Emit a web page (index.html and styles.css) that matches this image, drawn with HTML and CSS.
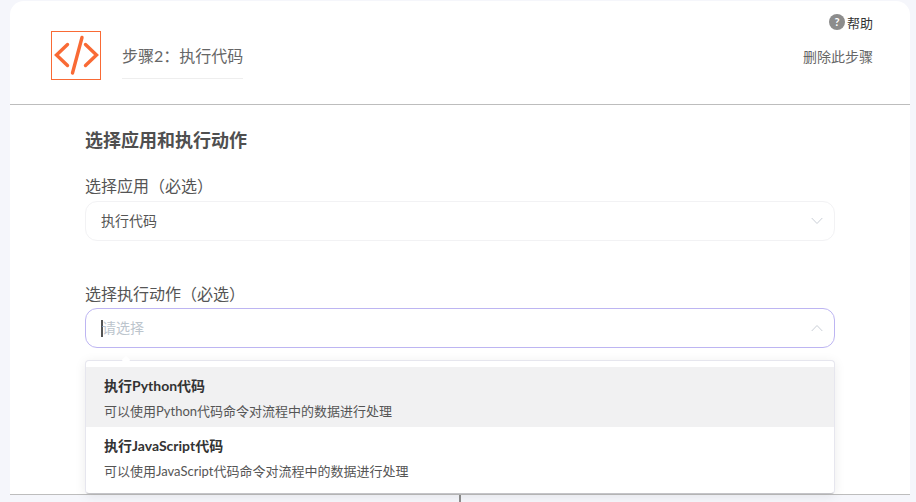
FILE: index.html
```
<!DOCTYPE html>
<html lang="zh">
<head>
<meta charset="utf-8">
<title>步骤2&#xFF1A;执行代码</title>
<link rel="stylesheet" href="styles.css">
</head>
<body>
<main class="card">
  <header class="head">
    <div class="logo">
      <svg viewBox="0 0 48 47" width="48" height="47" aria-hidden="true">
        <path d="M15.500 12.500 4.500 23 15.500 33.500M33.500 12.500 44.500 23 33.500 33.500M30 5.500 20.500 41" fill="none" stroke="#f96a35" stroke-width="3.400" stroke-linecap="round" stroke-linejoin="miter"/>
      </svg>
    </div>
    <div class="step-name">步骤2&#xFF1A;执行代码</div>
    <div class="actions">
      <div class="help"><span class="help-dot">?</span>帮助</div>
      <div class="delete">删除此步骤</div>
    </div>
  </header>
  <section class="body">
    <h2 class="section-title">选择应用和执行动作</h2>
    <label class="label">选择应用&#xFF08;必选&#xFF09;</label>
    <div class="select">
      <span class="value">执行代码</span>
      <svg class="chev" viewBox="0 0 12 8" width="12" height="8" aria-hidden="true"><path d="M.700 1 6 6.500 11.300 1" fill="none" stroke="#c9ced6" stroke-width="1"/></svg>
    </div>
    <label class="label label-second">选择执行动作&#xFF08;必选&#xFF09;</label>
    <div class="select select-open">
      <span class="caret"></span><span class="placeholder">请选择</span>
      <svg class="chev" viewBox="0 0 12 8" width="12" height="8" aria-hidden="true"><path d="M.700 7 6 1.500 11.300 7" fill="none" stroke="#c9ced6" stroke-width="1"/></svg>
    </div>
    <div class="menu">
      <div class="option option-active">
        <div class="option-title">执行Python代码</div>
        <div class="option-desc">可以使用Python代码命令对流程中的数据进行处理</div>
      </div>
      <div class="option">
        <div class="option-title">执行JavaScript代码</div>
        <div class="option-desc">可以使用JavaScript代码命令对流程中的数据进行处理</div>
      </div>
    </div>
  </section>
</main>
<div class="connector"></div>
</body>
</html>
```
FILE: styles.css
```
* { box-sizing: border-box; }
html, body { height: 100%; }
body {
  margin: 0;
  padding: 1px 6px 0 10px;
  overflow: hidden;
  background: #f5f6fb;
  color: #555;
  font-family: Lato, "Noto Sans CJK SC", sans-serif;
  font-size: 14px;
}
.card {
  height: 494px;
  background: #fff;
  border-radius: 14px 14px 0 0;
  border-bottom: 1px solid #bdbdbd;
}
.head {
  display: flex;
  height: 104px;
  padding: 30px 37px 0 41px;
  border-bottom: 1px solid #bdbdbd;
  position: relative;
}
.logo {
  width: 50px;
  height: 49px;
  border: 1px solid #f96a35;
  flex: none;
}
.logo svg { display: block; }
.step-name {
  margin: 5px 0 0 21px;
  height: 43px;
  padding-top: 8px;
  border-bottom: 1px solid #eee;
  font-size: 16px;
  line-height: 24px;
  color: #666;
}
.actions {
  margin: -18px 0 0 auto;
  display: flex;
  flex-direction: column;
  align-items: flex-end;
}
.help {
  display: flex;
  align-items: center;
  gap: 2px;
  height: 18px;
  font-size: 13px;
  color: #333;
}
.help-dot {
  width: 16px;
  height: 16px;
  border-radius: 50%;
  background: #8c8c8c;
  color: #fff;
  font-size: 11px;
  font-weight: 700;
  line-height: 16px;
  text-align: center;
}
.delete {
  margin-top: 17px;
  font-size: 14px;
  line-height: 18px;
  color: #666;
}
.body {
  position: relative;
  padding: 23px 75px 0;
}
.section-title {
  margin: 0;
  font-size: 18px;
  font-weight: 700;
  line-height: 24px;
  color: #4f4f4f;
}
.label {
  display: block;
  margin-top: 24px;
  font-size: 16px;
  line-height: 20px;
  color: #555;
}
.label-second { margin-top: 43px; }
.select {
  display: flex;
  align-items: center;
  height: 40px;
  margin-top: 5px;
  padding: 0 11px 0 15px;
  border: 1px solid #f2f2f4;
  border-radius: 12px;
  font-size: 14px;
}
.label-second + .select { margin-top: 4px; }
.value { color: #555; margin-top: -2px; }
.chev { margin-left: auto; display: block; }
.select-open { border-color: #bdb5f2; }
.caret {
  width: 2px;
  height: 17px;
  margin-right: -1px;
  background: #555;
}
.placeholder { color: #bcc5cd; margin-top: -2px; }
.menu {
  position: absolute;
  top: 255px;
  left: 75px;
  width: 750px;
  height: 134px;
  padding-top: 6px;
  background: #fff;
  border: 1px solid #e6e6ee;
  border-bottom-color: #c4c4c8;
  border-radius: 4px;
  box-shadow: 0 2px 12px rgba(0, 0, 0, .08);
}
.menu::before {
  content: "";
  position: absolute;
  top: -4px;
  left: 37px;
  width: 6px;
  height: 6px;
  background: #fff;
  transform: rotate(45deg);
}
.option {
  position: relative;
  height: 60px;
  padding: 9px 18px 0;
}
.option-active { background: #f1f1f2; }
.option-title {
  font-size: 14px;
  font-weight: 700;
  line-height: 20px;
  color: #333;
}
.option-desc {
  margin-top: 5px;
  font-size: 13px;
  line-height: 20px;
  color: #555;
}
.connector {
  width: 2px;
  height: 8px;
  margin-left: 449px;
  background: #8e8e8e;
}
```
